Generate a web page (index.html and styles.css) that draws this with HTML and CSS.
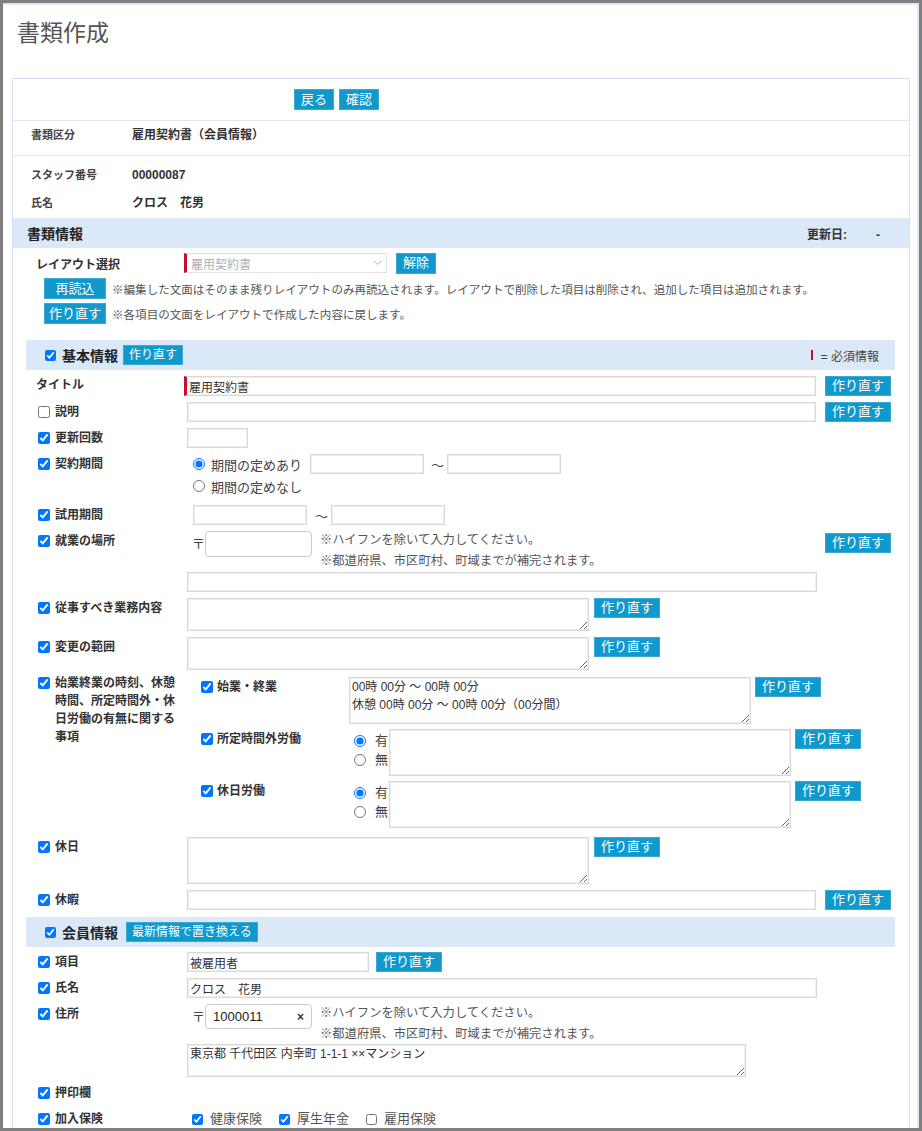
FILE: index.html
```html
<!DOCTYPE html>
<html lang="ja">
<head>
    <meta charset="UTF-8">
    <meta name="viewport" content="width=device-width, initial-scale=1.0">
    <title>書類作成</title>
    <link rel="stylesheet" href="styles.css">
</head>
<body>
<div class="window">
  <div class="page">
    <h1 class="page-title">書類作成</h1>

    <div class="panel">
      <div class="actions">
        <button class="btn">戻る</button>
        <button class="btn">確認</button>
      </div>

      <div class="info-row kind">
        <span class="info-label">書類区分</span>
        <span class="info-value">雇用契約書（会員情報）</span>
      </div>

      <div class="staff">
        <div class="info-row">
          <span class="info-label">スタッフ番号</span>
          <span class="info-value">00000087</span>
        </div>
        <div class="info-row">
          <span class="info-label">氏名</span>
          <span class="info-value">クロス　花男</span>
        </div>
      </div>

      <div class="doc-band">
        <span class="band-title">書類情報</span>
        <span class="updated">更新日:<span class="updated-val">-</span></span>
      </div>

      <div class="layout-box">
        <div class="layout-row">
          <span class="layout-label">レイアウト選択</span>
          <div class="select">
            <span>雇用契約書</span>
            <svg width="9" height="6" viewBox="0 0 9 6"><path d="M1 1l3.5 3.5L8 1" fill="none" stroke="#b5b5b5" stroke-width="1"/></svg>
          </div>
          <button class="btn clear-btn">解除</button>
        </div>
        <div class="tool-row">
          <button class="btn btn-fixed">再読込</button>
          <span class="note">※編集した文面はそのまま残りレイアウトのみ再読込されます。レイアウトで削除した項目は削除され、追加した項目は追加されます。</span>
        </div>
        <div class="tool-row">
          <button class="btn btn-fixed">作り直す</button>
          <span class="note">※各項目の文面をレイアウトで作成した内容に戻します。</span>
        </div>
      </div>

      <!-- 基本情報 -->
      <section class="form-section">
        <div class="sec-band">
          <input type="checkbox" checked>
          <span class="band-title">基本情報</span>
          <button class="btn btn-small">作り直す</button>
          <span class="legend"><i class="req-mark"></i>= 必須情報</span>
        </div>

        <div class="rows">
          <div class="row">
            <div class="row-label plain"><span>タイトル</span></div>
            <div class="row-field">
              <input class="text w-full required" type="text" value="雇用契約書">
              <button class="btn">作り直す</button>
            </div>
          </div>

          <div class="row">
            <label class="row-label"><input type="checkbox"><span>説明</span></label>
            <div class="row-field">
              <input class="text w-full" type="text">
              <button class="btn">作り直す</button>
            </div>
          </div>

          <div class="row">
            <label class="row-label"><input type="checkbox" checked><span>更新回数</span></label>
            <div class="row-field">
              <input class="text w-count" type="text">
            </div>
          </div>

          <div class="row">
            <label class="row-label"><input type="checkbox" checked><span>契約期間</span></label>
            <div class="row-field stack period">
              <div class="radio-line">
                <input type="radio" name="period" checked><span>期間の定めあり</span>
                <input class="text date gap-left" type="text">
                <span class="wave">〜</span>
                <input class="text date" type="text">
              </div>
              <div class="radio-line second">
                <input type="radio" name="period"><span>期間の定めなし</span>
              </div>
            </div>
          </div>

          <div class="row">
            <label class="row-label"><input type="checkbox" checked><span>試用期間</span></label>
            <div class="row-field">
              <div class="date-range">
                <input class="text date" type="text">
                <span class="wave wide">〜</span>
                <input class="text date" type="text">
              </div>
            </div>
          </div>

          <div class="row">
            <label class="row-label"><input type="checkbox" checked><span>就業の場所</span></label>
            <div class="row-field stack">
              <div class="zip-line">
                <span class="zip-mark">〒</span>
                <div class="zip"></div>
                <div class="zip-notes">
                  <div>※ハイフンを除いて入力してください。</div>
                  <div>※都道府県、市区町村、町域までが補完されます。</div>
                </div>
                <button class="btn push-right">作り直す</button>
              </div>
              <input class="text w-full" type="text">
            </div>
          </div>

          <div class="row">
            <label class="row-label"><input type="checkbox" checked><span>従事すべき業務内容</span></label>
            <div class="row-field">
              <textarea class="area"></textarea>
              <button class="btn">作り直す</button>
            </div>
          </div>

          <div class="row">
            <label class="row-label"><input type="checkbox" checked><span>変更の範囲</span></label>
            <div class="row-field">
              <textarea class="area"></textarea>
              <button class="btn">作り直す</button>
            </div>
          </div>

          <div class="row hours">
            <label class="row-label multi"><input type="checkbox" checked><span>始業終業の時刻、休憩時間、所定時間外・休日労働の有無に関する事項</span></label>
            <div class="row-field stack subs">
              <div class="sub-row">
                <label class="sub-label"><input type="checkbox" checked><span>始業・終業</span></label>
                <textarea class="area tall">00時 00分 ～ 00時 00分
休憩 00時 00分 ～ 00時 00分（00分間）</textarea>
                <button class="btn">作り直す</button>
              </div>
              <div class="sub-row">
                <label class="sub-label"><input type="checkbox" checked><span>所定時間外労働</span></label>
                <div class="yn">
                  <label><input type="radio" name="overtime" checked>有</label>
                  <label><input type="radio" name="overtime">無</label>
                </div>
                <textarea class="area tall"></textarea>
                <button class="btn">作り直す</button>
              </div>
              <div class="sub-row">
                <label class="sub-label"><input type="checkbox" checked><span>休日労働</span></label>
                <div class="yn">
                  <label><input type="radio" name="holiday" checked>有</label>
                  <label><input type="radio" name="holiday">無</label>
                </div>
                <textarea class="area tall"></textarea>
                <button class="btn">作り直す</button>
              </div>
            </div>
          </div>

          <div class="row">
            <label class="row-label"><input type="checkbox" checked><span>休日</span></label>
            <div class="row-field">
              <textarea class="area tall"></textarea>
              <button class="btn">作り直す</button>
            </div>
          </div>

          <div class="row">
            <label class="row-label"><input type="checkbox" checked><span>休暇</span></label>
            <div class="row-field">
              <input class="text w-full" type="text">
              <button class="btn">作り直す</button>
            </div>
          </div>
        </div>
      </section>

      <!-- 会員情報 -->
      <section class="form-section member">
        <div class="sec-band">
          <input type="checkbox" checked>
          <span class="band-title">会員情報</span>
          <button class="btn btn-small">最新情報で置き換える</button>
        </div>

        <div class="rows">
          <div class="row">
            <label class="row-label"><input type="checkbox" checked><span>項目</span></label>
            <div class="row-field">
              <input class="text w-item" type="text" value="被雇用者">
              <button class="btn">作り直す</button>
            </div>
          </div>

          <div class="row">
            <label class="row-label"><input type="checkbox" checked><span>氏名</span></label>
            <div class="row-field">
              <input class="text w-full" type="text" value="クロス　花男">
            </div>
          </div>

          <div class="row">
            <label class="row-label"><input type="checkbox" checked><span>住所</span></label>
            <div class="row-field stack">
              <div class="zip-line">
                <span class="zip-mark">〒</span>
                <div class="zip"><span class="zip-val">1000011</span><span class="zip-clear">×</span></div>
                <div class="zip-notes">
                  <div>※ハイフンを除いて入力してください。</div>
                  <div>※都道府県、市区町村、町域までが補完されます。</div>
                </div>
              </div>
              <textarea class="area address">東京都 千代田区 内幸町 1-1-1 ××マンション</textarea>
            </div>
          </div>

          <div class="row">
            <label class="row-label"><input type="checkbox" checked><span>押印欄</span></label>
          </div>

          <div class="row">
            <label class="row-label"><input type="checkbox" checked><span>加入保険</span></label>
            <div class="row-field">
              <div class="checks">
                <label><input type="checkbox" checked>健康保険</label>
                <label><input type="checkbox" checked>厚生年金</label>
                <label><input type="checkbox">雇用保険</label>
              </div>
            </div>
          </div>
        </div>
      </section>
    </div>
  </div>
</div>
</body>
</html>
```

FILE: styles.css
```css
*{
    box-sizing: border-box;
}
body{
    margin: 0;
    font-family: "Liberation Sans", "Noto Sans CJK JP", sans-serif;
    font-size: 12px;
    color: #333;
    background: #fff;
}
.window{
    height: 100vh;
    border: 3px solid #7f7f7f;
    overflow: hidden;
}
.page{
    height: 100%;
    border-top: 2px solid #dde9f6;
    border-right: 2px solid #dde9f6;
    padding: 0 7px 0 9px;
}
.page-title{
    margin: 14px 0 31px 5px;
    font-size: 23px;
    line-height: 28px;
    font-weight: normal;
    color: #555;
}

/* buttons */
.btn{
    height: 20px;
    padding: 0 6px;
    font-family: inherit;
    font-size: 13px;
    line-height: 18px;
    color: #fff;
    background: #0f99cc;
    border: 1px solid #3ea8d5;
    border-radius: 0;
    white-space: nowrap;
    flex: none;
    cursor: pointer;
}
.actions .btn,
.clear-btn{
    height: 21px;
}
.btn-fixed{
    width: 62px;
    height: 21px;
    padding: 0;
}
.btn-small{
    font-size: 12px;
    padding: 0 5px;
}

/* panel head */
.panel{
    border: 1px solid #d3e3f4;
    border-bottom: none;
    padding-bottom: 60px;
}
.actions{
    display: flex;
    gap: 5px;
    padding: 10px 0 10px 281px;
    border-bottom: 1px solid #dce8f4;
}
.info-row{
    display: flex;
    line-height: 22px;
}
.kind{
    padding: 3px 0 9px 18px;
    border-bottom: 1px solid #dce8f4;
}
.info-label{
    width: 101px;
    font-size: 11px;
    font-weight: bold;
    color: #444;
}
.info-value{
    font-weight: bold;
}
.staff{
    display: flex;
    flex-direction: column;
    gap: 6px;
    padding: 8px 0 4px 18px;
}

/* bands */
.doc-band,
.sec-band{
    display: flex;
    align-items: center;
    height: 30px;
    background: #dbe8f7;
}
.doc-band{
    padding: 0 29px 0 14px;
}
.band-title{
    font-size: 14px;
    font-weight: bold;
    color: #222;
}
.updated{
    margin-left: auto;
    font-weight: bold;
}
.updated-val{
    margin-left: 29px;
}
.sec-band{
    padding: 0 16px 0 19px;
}
.sec-band input{
    width: 11px;
    height: 11px;
    margin: 0 6px 0 0;
}
.sec-band .btn{
    margin-left: 5px;
}
.member .sec-band .btn{
    margin-left: 8px;
}
.legend{
    margin-left: auto;
    display: flex;
    align-items: center;
    gap: 8px;
    color: #444;
}
.req-mark{
    width: 2px;
    height: 10px;
    background: #c8102e;
}

/* layout select */
.layout-box{
    padding: 4px 0 0 23px;
}
.layout-row{
    display: flex;
    align-items: center;
    height: 22px;
}
.layout-label{
    width: 148px;
    font-weight: bold;
}
.select{
    width: 203px;
    height: 20px;
    display: flex;
    align-items: center;
    justify-content: space-between;
    padding: 0 4px;
    color: #b0b0b0;
    border: 1px solid #e2e2e2;
    border-left: 3px solid #c8102e;
}
.clear-btn{
    margin-left: 9px;
}
.tool-row{
    display: flex;
    align-items: center;
    gap: 6px;
    margin-top: 4px;
    padding-left: 8px;
}
.note{
    font-size: 11.55px;
    color: #555;
}

/* form sections */
.form-section{
    margin: 16px 14px 0 13px;
}
.form-section.member{
    margin-top: 7px;
}
.rows{
    display: flex;
    flex-direction: column;
    gap: 6px;
    padding-top: 6px;
}
.member .rows{
    padding-top: 5px;
}
.row{
    display: flex;
    align-items: flex-start;
    padding-left: 12px;
}
.row-label{
    flex: none;
    width: 149px;
    display: flex;
    align-items: flex-start;
    gap: 5px;
    line-height: 20px;
    font-weight: bold;
    color: #333;
}
.row-label span{
    width: 124px;
}
.row-label input,
.sub-label input{
    width: 12px;
    height: 12px;
    margin: 4px 0 0;
    flex: none;
}
.row-label.plain{
    margin: -1px 2px 0 -2px;
}
.row-label.multi{
    line-height: 18px;
    margin-top: -3px;
}
.row-label.multi input{
    margin-top: 3px;
}
.row-field{
    flex: none;
    width: 704px;
    display: flex;
    align-items: flex-start;
    gap: 5px;
}
.row-field.stack{
    flex-direction: column;
    gap: 0;
}
.hours{
    margin: 1px 0 3px;
}
.row-field.subs{
    gap: 5px;
}

/* inputs */
.text,
.area{
    font-family: inherit;
    font-size: 12px;
    color: #333;
    border: 1px solid #d9d9d9;
    box-shadow: inset 0 0 0 1px #efefef;
    border-radius: 0;
    outline: none;
}
.text{
    height: 20px;
    padding: 0 2px;
}
.w-full{
    width: 630px;
    margin-right: 4px;
}
.required{
    width: 633px;
    margin-left: -3px;
    border-left: 3px solid #c8102e;
}
.w-count{
    width: 61px;
}
.w-item{
    width: 182px;
    margin-right: 2px;
}
.date{
    width: 114px;
}
.area{
    width: 402px;
    height: 33px;
    padding: 0 2px;
    line-height: 18px;
    margin: 0;
}
.area.tall{
    height: 47px;
}
.area.address{
    width: 559px;
}

/* radios and dates */
.period{
    padding-bottom: 3px;
}
.radio-line{
    display: flex;
    align-items: center;
    height: 20px;
    padding-left: 6px;
    font-size: 13px;
    color: #444;
}
.radio-line.second{
    margin-top: 2px;
}
.radio-line input[type=radio]{
    width: 12px;
    height: 12px;
    margin: 0 6px 0 0;
}
.gap-left{
    margin-left: 8px;
}
.wave{
    font-size: 13px;
    color: #444;
    margin: 0 3px 0 7px;
}
.wave.wide{
    margin-left: 8px;
}
.date-range{
    display: flex;
    align-items: center;
    padding-left: 6px;
}

/* zip code */
.zip-line{
    display: flex;
    align-items: flex-start;
    width: 100%;
    height: 41px;
}
.member .zip-line{
    height: 40px;
}
.zip-mark{
    width: 18px;
    padding-left: 5px;
    font-size: 13px;
    line-height: 26px;
    color: #444;
}
.zip{
    width: 107px;
    height: 26px;
    flex: none;
    display: flex;
    align-items: center;
    justify-content: space-between;
    padding: 0 7px;
    border: 1px solid #ccc;
    border-radius: 4px;
}
.member .zip{
    height: 25px;
}
.zip-val{
    font-size: 13px;
    color: #222;
}
.zip-clear{
    font-size: 12px;
    font-weight: bold;
}
.zip-notes{
    margin: -1px 0 0 8px;
    font-size: 12.3px;
    line-height: 21px;
    color: #555;
}
.push-right{
    margin: 2px 0 0 auto;
}

/* sub rows */
.sub-row{
    display: flex;
    align-items: flex-start;
    gap: 4px;
}
.sub-label{
    flex: none;
    width: 158px;
    display: flex;
    align-items: flex-start;
    gap: 4px;
    padding-left: 14px;
    line-height: 20px;
    font-weight: bold;
}
.yn{
    flex: none;
    width: 36px;
    padding: 2px 0 0 5px;
    display: flex;
    flex-direction: column;
    font-size: 13px;
    line-height: 19px;
    color: #444;
}
.yn label{
    display: flex;
    align-items: center;
}
.yn input{
    width: 12px;
    height: 12px;
    margin: 0 9px 0 0;
}

/* insurance checks */
.checks{
    display: flex;
    gap: 17px;
    padding-left: 5px;
    font-size: 13px;
    line-height: 20px;
    color: #555;
}
.checks label{
    display: flex;
    align-items: center;
    gap: 7px;
}
.checks input{
    width: 11px;
    height: 11px;
    margin: 0;
}
```
